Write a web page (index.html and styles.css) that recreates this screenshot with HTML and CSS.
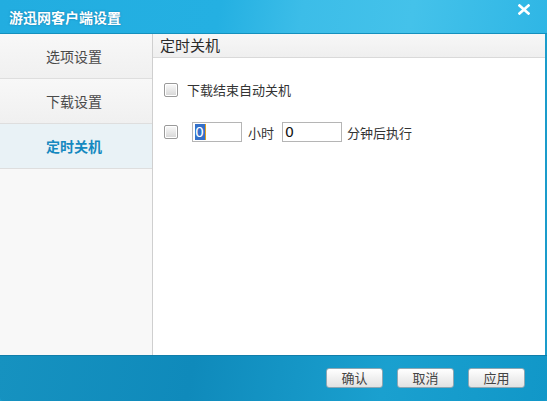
FILE: index.html
```html
<!DOCTYPE html>
<html>
<head>
<meta charset="utf-8">
<link rel="stylesheet" href="styles.css">
</head>
<body>
<div class="window">
  <div class="titlebar">
    <span class="title">游迅网客户端设置</span>
    <span class="close">
      <svg width="12" height="11" viewBox="0 0 12 11"><path d="M1.5 1.5 L10.5 9.5 M10.5 1.5 L1.5 9.5" stroke="#fff" stroke-width="2.6" stroke-linecap="square"/></svg>
    </span>
  </div>
  <div class="main">
    <div class="sidebar">
      <div class="nav-item">选项设置</div>
      <div class="nav-item">下载设置</div>
      <div class="nav-item active">定时关机</div>
    </div>
    <div class="content">
      <div class="content-head">定时关机</div>
      <div class="content-body">
        <div class="row row1">
          <span class="check"></span>
          <span class="label">下载结束自动关机</span>
        </div>
        <div class="row row2">
          <span class="check"></span>
          <span class="field field-h"><span class="sel">0</span></span>
          <span class="unit unit-h">小时</span>
          <span class="field field-m">0</span>
          <span class="unit unit-m">分钟后执行</span>
        </div>
      </div>
    </div>
  </div>
  <div class="footer">
    <button class="btn">确认</button>
    <button class="btn">取消</button>
    <button class="btn">应用</button>
  </div>
</div>
</body>
</html>
```

FILE: styles.css
```css
html, body {
  margin: 0;
  padding: 0;
  background: #ffffff;
}
body {
  font-family: "Noto Sans CJK SC", "Liberation Sans", sans-serif;
  font-size: 13px;
  color: #333;
}
.window {
  width: 547px;
  height: 401px;
  display: flex;
  flex-direction: column;
  background: #1a9ccb;
  box-sizing: border-box;
}
.titlebar {
  height: 33px;
  border-bottom: 1px solid #1590bd;
  background: linear-gradient(100deg, #22ade0 0%, #24b0e2 40%, #3cbde8 55%, #44c2ea 75%, #2fb6e5 100%);
  display: flex;
  align-items: center;
  justify-content: space-between;
  padding: 0 0 0 9px;
  flex: none;
}
.title {
  color: #fff;
  font-weight: bold;
  font-size: 14px;
  text-shadow: 0 0 2px rgba(0,80,130,0.6);
  margin-top: 1px;
}
.close {
  width: 12px;
  height: 11px;
  margin-right: 17px;
  margin-top: -14px;
  display: flex;
}
.main {
  flex: 1;
  display: flex;
  margin-right: 2px;
  background: #fff;
  min-height: 0;
}
.sidebar {
  width: 152px;
  border-right: 1px solid #cfcfcf;
  background: #f8f8f8;
  display: flex;
  flex-direction: column;
  flex: none;
}
.nav-item {
  height: 44px;
  border-bottom: 1px solid #dedede;
  display: flex;
  align-items: center;
  justify-content: center;
  color: #4a4a4a;
  font-size: 14px;
  background: linear-gradient(#f8f8f8, #f0f0f0);
  padding-right: 4px;
}
.nav-item.active {
  background: #e9f2f6;
  color: #1589c0;
  font-weight: bold;
}
.content {
  flex: 1;
  display: flex;
  flex-direction: column;
}
.content-head {
  height: 23px;
  background: linear-gradient(#f7f7f7, #efefef);
  border-bottom: 1px solid #d9d9d9;
  padding-left: 7px;
  font-size: 15px;
  color: #2a2a2a;
  line-height: 21px;
}
.content-body {
  padding: 0 0 0 11px;
}
.row {
  display: flex;
  align-items: center;
}
.row1 {
  margin-top: 22px;
}
.row2 {
  margin-top: 23px;
}
.check {
  width: 12px;
  height: 12px;
  border: 1px solid #9a9a9a;
  border-radius: 2px;
  background: linear-gradient(#fafafa, #d6d6d6);
  box-shadow: inset 0 0 0 1px #fff;
  flex: none;
}
.label {
  margin-left: 9px;
  color: #333;
}
.field {
  height: 18px;
  border: 1px solid #b5b5b5;
  background: #fff;
  display: flex;
  align-items: center;
  font-size: 14px;
  color: #111;
  box-sizing: content-box;
  padding-left: 2px;
  font-family: "DejaVu Sans", sans-serif;
}
.field-h {
  width: 46px;
  margin-left: 14px;
}
.field-m {
  width: 56px;
}
.sel {
  background: #3470c9;
  color: #fff;
  border-right: 1px solid #e0a020;
  height: 16px;
  line-height: 16px;
  padding: 0 1px 0 0;
}
.unit {
  color: #333;
}
.unit-h {
  margin: 0 8px 0 6px;
}
.unit-m {
  margin-left: 5px;
}
.footer {
  height: 46px;
  flex: none;
  border-top: 1px solid #117eaa;
  background: linear-gradient(100deg, #1692c0 0%, #0f8abb 35%, #1aa0cf 70%, #1197c8 100%);
  display: flex;
  align-items: center;
  justify-content: flex-end;
  gap: 14px;
  padding-right: 22px;
  box-sizing: border-box;
  border-radius: 0 0 4px 4px;
}
.btn {
  width: 57px;
  height: 20px;
  padding: 0;
  border: 1px solid #8ea7b3;
  border-radius: 3px;
  background: linear-gradient(#ffffff, #e2e2e2);
  font-family: "Noto Sans CJK SC", sans-serif;
  font-size: 13px;
  color: #444;
  line-height: 18px;
  margin-top: -2px;
}
```
